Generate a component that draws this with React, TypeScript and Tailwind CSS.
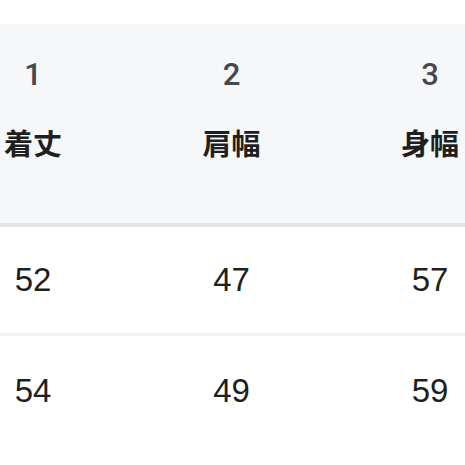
const HEADERS = [
  { no: "1", label: "着丈" },
  { no: "2", label: "肩幅" },
  { no: "3", label: "身幅" },
];

const ROWS = [
  ["52", "47", "57"],
  ["54", "49", "59"],
];

const FONT = "font-['Liberation_Sans','Noto_Sans_CJK_JP',sans-serif]";

export default function App() {
  return (
    <div className={`h-[465px] w-[465px] overflow-hidden bg-white pt-[24px] ${FONT}`}>
      <div className="grid h-[203px] grid-cols-[66px_1fr_66px] border-b-[4px] border-[#e3e5e9] bg-[#f6f7f9] pr-[2px] pt-[34px]">
        {HEADERS.map((h) => (
          <div key={h.no} className="flex flex-col items-center">
            <span className="font-['Roboto',sans-serif] text-[31px] font-medium leading-[34px] text-[#45484d]">
              {h.no}
            </span>
            <span className="mt-[34px] font-['Noto_Sans_CJK_JP',sans-serif] text-[29px] font-bold leading-[32px] text-[#1f1f1f]">
              {h.label}
            </span>
          </div>
        ))}
      </div>
      {ROWS.map((row, i) => (
        <div
          key={i}
          className="grid h-[109px] grid-cols-[66px_1fr_66px] items-center border-b-[3px] border-[#f1f2f4] pr-[2px] last:border-b-0"
        >
          {row.map((v, j) => (
            <span key={j} className="text-center text-[33px] leading-[36px] text-[#1f1f1f]">
              {v}
            </span>
          ))}
        </div>
      ))}
    </div>
  );
}
